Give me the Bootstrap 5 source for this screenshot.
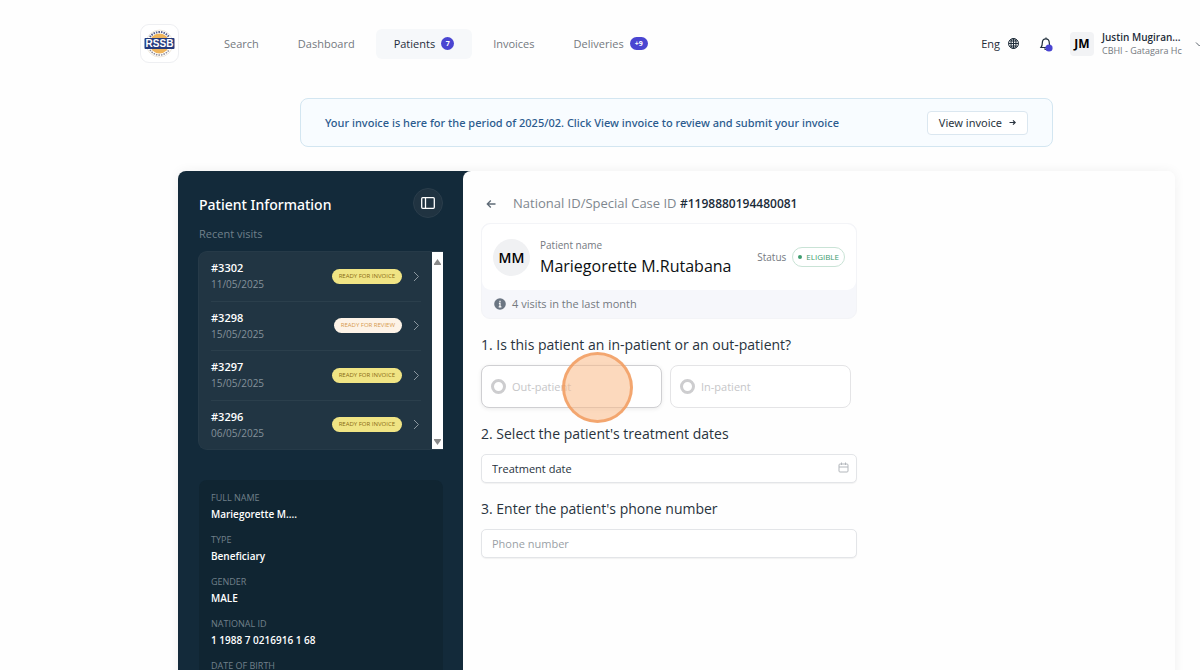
<!DOCTYPE html>
<html lang="en">
<head>
<meta charset="utf-8">
<meta name="viewport" content="width=device-width, initial-scale=1">
<title>Patients - RSSB</title>
<link href="https://cdn.jsdelivr.net/npm/bootstrap@5.3.0/dist/css/bootstrap.min.css" rel="stylesheet">
<style>
  body { font-family: "Open Sans", "Noto Sans", sans-serif; font-size: 11px; line-height: 16px; color: #1f2d3a; background: #fefefe; }
  svg { display: block; flex: none; }
  a { text-decoration: none; color: inherit; }

  /* top bar */
  .topbar { padding: 24px 0 0 140px; height: 63px; }
  .brand-tile { width: 39px; height: 39px; border: 1px solid #eeeff2; border-radius: 9px; background: #fff; }
  .menu { margin-left: 27px; gap: 3px; }
  .menu a { height: 30px; padding: 0 18px; border-radius: 6px; color: #74797f; gap: 6px; }
  .menu a.active { background: #f6f8fa; color: #1f2d3a; }
  .pill { background: #4a45d1; color: #fff; font-size: 7px; line-height: 13px; height: 13px; min-width: 13px; border-radius: 7px; font-weight: 700; text-align: center; }
  .pill-wide { padding: 0 5px; }
  .plain-btn { border: 0; background: none; padding: 0; color: inherit; }
  .initials { width: 24px; height: 24px; border-radius: 4px; background: #f2f3f5; color: #000; font-size: 12px; font-weight: 700; line-height: 24px; text-align: center; }
  .who { width: 82px; line-height: 13px; }
  .who strong { font-size: 10px; font-weight: 600; }
  .who span { font-size: 9px; color: #74797f; white-space: nowrap; }

  /* invoice notice */
  .notice { margin: 35px 147px 0 300px; padding: 0 24px; height: 49px; border: 1px solid #d3e6f1; border-radius: 8px; background: #f8fcff; color: #2b5b8e; font-family: "Noto Sans", "Open Sans", sans-serif; font-weight: 500; }
  .notice a { height: 24px; padding: 0 11px; border: 1px solid #dbe7f0; border-radius: 4px; background: #fff; color: #2b3540; gap: 7px; font-weight: 400; }

  /* main sheet */
  .sheet { margin: 24px 25px 0 178px; border-radius: 8px 8px 0 0; background: linear-gradient(90deg, #132a3a 300px, #fefefe 300px); box-shadow: 0 0 12px rgba(0,0,0,.06); }
  .side { flex: 0 0 285px; padding: 17px 20px 0 21px; }
  .side h1 { font-family: "Noto Sans", "Open Sans", sans-serif; font-size: 14px; font-weight: 500; line-height: 20px; color: #fff; padding-top: 4px; }
  .round-btn { width: 30px; height: 30px; border: 1px solid #2a3d4b; border-radius: 50%; background: #203341; padding: 0; }
  .recent { color: #70808b; margin-top: 8px; }
  .visits { height: 199px; margin: 9px 0 0 -1px; border: 1px solid #263a48; border-right: 0; border-radius: 9px 0 0 9px; background: #213543; }
  .visit-list { padding: 0 11px 0 12px; }
  .visit-list a { border-bottom: 1px solid #2b3f4c; }
  .visit-list a:last-child { border-bottom: 0; }
  .visit-list b { display: block; color: #fff; font-weight: 600; line-height: 17px; }
  .visit-list time { display: block; font-size: 10px; line-height: 17px; color: #84919a; }
  .state { padding: 0 7px; border-radius: 8px; background: #f0e484; color: #8a6b14; font-size: 6px; line-height: 15px; }
  .state-review { background: #fdf3e7; color: #d69a4c; }
  .scroll-track { width: 11px; background: #fff; padding: 7px 0 4px; }
  .facts { margin: 30px 0 0; padding: 10px 12px; border-radius: 8px; background: #102532; }
  .facts dt { font-size: 9px; font-weight: 400; color: #71808a; line-height: 16px; }
  .facts dd { font-size: 10px; font-weight: 600; color: #fff; line-height: 16px; margin: 0 0 10px; }

  .work { background: #fefefe; border-radius: 8px 8px 0 0; padding: 22px 18px 0; }
  .form-col { max-width: 376px; }
  .case-line { font-size: 13px; line-height: 20px; color: #7f878e; gap: 17px; padding-left: 5px; }
  .case-line strong { font-size: 12px; font-weight: 600; color: #1b2b39; }
  .person { margin-top: 9px; border: 1px solid #f3f4f7; border-radius: 9px; background: #f6f7fb; }
  .person-top { height: 66px; padding: 0 11px; border-radius: 9px; background: #fff; gap: 10px; }
  .avatar { width: 37px; height: 37px; border-radius: 50%; background: #f0f1f3; color: #000; font-size: 14px; font-weight: 600; line-height: 37px; text-align: center; }
  .muted-label { font-size: 10px; color: #74797f; }
  .person h2 { font-size: 16px; font-weight: 400; line-height: 22px; color: #0c0f12; margin: 2px 0 0; }
  .status-pair { gap: 6px; }
  .eligible { height: 20px; padding: 0 5px; border: 1px solid #c9e3d6; border-radius: 10px; color: #3f9d70; font-size: 8px; gap: 4px; font-weight: 500; }
  .dot { width: 4px; height: 4px; border-radius: 50%; background: #3f9d70; }
  .visit-note { height: 28px; padding: 0 12px; color: #74797f; gap: 6px; }
  .question { font-size: 14px; line-height: 20px; font-weight: 400; color: #28333d; margin: 0; padding: 16px 0 10px; }
  .choice { flex: 0 0 181px; height: 43px; padding: 0 9px; border: 1px solid #e4e4e6; border-radius: 8px; background: #fff; color: #c6c6c8; gap: 6px; }
  .choice-hot { border-color: #cfcfd2; box-shadow: 0 1px 4px rgba(0,0,0,.08); }
  .choice input { appearance: none; width: 15px; height: 15px; margin: 0; border: 3px solid #cdcdcf; border-radius: 50%; background: #fff; }
  .click-mark { position: absolute; left: 81px; top: -13px; width: 71px; height: 71px; border: 3px solid rgba(240,150,85,.75); border-radius: 50%; background: rgba(250,185,135,.55); pointer-events: none; }
  .entry { display: block; width: 100%; height: 29px; padding: 0 10px; border: 1px solid #e3e5e8; border-radius: 5px; background: #fff; color: #28333d; box-shadow: 0 1px 1px rgba(0,0,0,.05); }
  .entry::placeholder { color: #9a9fa6; }
  .entry-dark::placeholder { color: #28333d; opacity: 1; }
  .entry-icon { position: absolute; right: 8px; top: 8px; }
</style>
</head>
<body>
<div class="vh-100 d-flex flex-column overflow-hidden">
  <header class="topbar d-flex align-items-center flex-shrink-0">
    <a href="#" class="brand-tile d-flex align-items-center justify-content-center flex-shrink-0" aria-label="RSSB home">
      <svg width="31" height="31" viewBox="0 0 62 62">
        <circle cx="31" cy="31" r="27" fill="#fff" stroke="#dccfb6" stroke-width="1"/>
        <circle cx="31" cy="31" r="20" fill="#efb45a"/>
        <path d="M12 18a23 23 0 0 1 38 0" fill="none" stroke="#59618b" stroke-width="4" stroke-dasharray="3 2"/>
        <path d="M12 44a23 23 0 0 0 38 0" fill="none" stroke="#8e8a94" stroke-width="3" stroke-dasharray="3 2"/>
        <rect x="1" y="20" width="60" height="22" rx="2" fill="#243a7c"/>
        <text x="31" y="38" text-anchor="middle" font-family="Liberation Sans, sans-serif" font-weight="700" font-size="20" fill="#fff">RSSB</text>
      </svg>
    </a>
    <nav class="menu d-flex" aria-label="Main">
      <a class="d-flex align-items-center" href="#">Search</a>
      <a class="d-flex align-items-center" href="#">Dashboard</a>
      <a class="active d-flex align-items-center" href="#" aria-current="page">Patients <span class="pill">7</span></a>
      <a class="d-flex align-items-center" href="#">Invoices</a>
      <a class="d-flex align-items-center" href="#">Deliveries <span class="pill pill-wide">+9</span></a>
    </nav>
    <div class="ms-auto d-flex align-items-center flex-shrink-0">
      <button class="plain-btn d-flex align-items-center gap-2" type="button">Eng
        <svg width="11" height="11" viewBox="0 0 22 22" fill="none" stroke="#1f2d3a" stroke-width="2"><circle cx="11" cy="11" r="10"/><ellipse cx="11" cy="11" rx="5" ry="10"/><path d="M1 11h20M3 6h16M3 16h16M11 1v20"/></svg>
      </button>
      <button class="plain-btn ms-3 ps-1" type="button" aria-label="Notifications">
        <svg width="15" height="16" viewBox="0 0 15 16" fill="none" stroke="#1f2d3a" stroke-width="1.200"><path d="M7 1.500v1M2 11.500h9.500c-1-1.200-1.200-2.200-1.200-4.500C10.300 4.500 9 2.800 6.800 2.800S3.300 4.500 3.300 7c0 2.300-.3 3.300-1.300 4.500zM5.500 12.500a1.400 1.400 0 0 0 2.600 0"/><circle cx="10" cy="12" r="3.600" fill="#4a45d1" stroke="none"/></svg>
      </button>
      <button class="plain-btn ms-3 d-flex align-items-center gap-2 text-start" type="button">
        <span class="initials">JM</span>
        <span class="who d-flex flex-column"><strong>Justin Mugiran...</strong><span>CBHI - Gatagara Hc</span></span>
        <svg width="8" height="6" viewBox="0 0 8 6" fill="none" stroke="#5c646c"><path d="M4 1.500l3.500 3.500L11 1.500"/></svg>
      </button>
    </div>
  </header>

  <div class="notice d-flex align-items-center justify-content-between flex-shrink-0" role="status">
    <span>Your invoice is here for the period of 2025/02. Click View invoice to review and submit your invoice</span>
    <a class="d-flex align-items-center flex-shrink-0" href="#">View invoice
      <svg width="7" height="7" viewBox="0 0 7 7" fill="none" stroke="#2b3540" stroke-width="1.200"><path d="M.5 3.500h5.500M4 1.300l2.200 2.200L4 5.700"/></svg>
    </a>
  </div>

  <main class="sheet d-flex flex-grow-1">
    <aside class="side">
      <div class="d-flex justify-content-between">
        <h1 class="m-0 align-self-center">Patient Information</h1>
        <button class="round-btn d-flex align-items-center justify-content-center" type="button" aria-label="Collapse panel">
          <svg width="14" height="12" viewBox="0 0 14 12" fill="none" stroke="#fff" stroke-width="1.300"><rect x=".7" y=".7" width="12.600" height="10.600" rx="1"/><path d="M4.500.7v10.600"/></svg>
        </button>
      </div>
      <div class="recent">Recent visits</div>
      <div class="visits d-flex">
        <div class="visit-list flex-grow-1 d-flex flex-column">
          <a href="#" class="d-flex align-items-center flex-fill"><span class="me-auto"><b>#3302</b><time>11/05/2025</time></span><span class="state">READY FOR INVOICE</span><svg class="ms-2" width="11" height="11" viewBox="0 0 11 11" fill="none" stroke="#8b979f"><path d="M4 1l4.500 4.500L4 10"/></svg></a>
          <a href="#" class="d-flex align-items-center flex-fill"><span class="me-auto"><b>#3298</b><time>15/05/2025</time></span><span class="state state-review">READY FOR REVIEW</span><svg class="ms-2" width="11" height="11" viewBox="0 0 11 11" fill="none" stroke="#8b979f"><path d="M4 1l4.500 4.500L4 10"/></svg></a>
          <a href="#" class="d-flex align-items-center flex-fill"><span class="me-auto"><b>#3297</b><time>15/05/2025</time></span><span class="state">READY FOR INVOICE</span><svg class="ms-2" width="11" height="11" viewBox="0 0 11 11" fill="none" stroke="#8b979f"><path d="M4 1l4.500 4.500L4 10"/></svg></a>
          <a href="#" class="d-flex align-items-center flex-fill"><span class="me-auto"><b>#3296</b><time>06/05/2025</time></span><span class="state">READY FOR INVOICE</span><svg class="ms-2" width="11" height="11" viewBox="0 0 11 11" fill="none" stroke="#8b979f"><path d="M4 1l4.500 4.500L4 10"/></svg></a>
        </div>
        <div class="scroll-track d-flex flex-column justify-content-between align-items-center" aria-hidden="true">
          <svg width="7" height="6" viewBox="0 0 7 6" fill="#8a8a8a"><path d="M3.500 0L7 5v1H0V5z"/></svg>
          <svg width="7" height="6" viewBox="0 0 7 6" fill="#8a8a8a"><path d="M3.500 6L7 1V0H0v1z"/></svg>
        </div>
      </div>
      <dl class="facts">
        <dt>FULL NAME</dt><dd>Mariegorette M....</dd>
        <dt>TYPE</dt><dd>Beneficiary</dd>
        <dt>GENDER</dt><dd>MALE</dd>
        <dt>NATIONAL ID</dt><dd>1 1988 7 0216916 1 68</dd>
        <dt>DATE OF BIRTH</dt>
      </dl>
    </aside>

    <section class="work flex-grow-1">
      <form class="form-col">
        <div class="case-line d-flex align-items-center">
          <a href="#" aria-label="Back"><svg width="10" height="10" viewBox="0 0 10 10" fill="none" stroke="#5e6a76" stroke-width="1.300"><path d="M9.500 5H1.500M4.800 1.500L1.300 5l3.500 3.500"/></svg></a>
          <span>National ID/Special Case ID <strong>#1198880194480081</strong></span>
        </div>
        <div class="person">
          <div class="person-top d-flex align-items-center">
            <span class="avatar">MM</span>
            <div class="me-auto"><div class="muted-label">Patient name</div><h2>Mariegorette M.Rutabana</h2></div>
            <div class="status-pair d-flex align-items-center">
              <span class="muted-label">Status</span>
              <span class="eligible d-flex align-items-center"><i class="dot"></i>ELIGIBLE</span>
            </div>
          </div>
          <div class="visit-note d-flex align-items-center">
            <svg width="12" height="12" viewBox="0 0 12 12"><circle cx="6" cy="6" r="5.800" fill="#6b7683"/><path d="M6 2.700v1.500M4.900 5.300H6v3.500M4.700 8.900h2.700" fill="none" stroke="#fff" stroke-width="1.200"/></svg>
            4 visits in the last month
          </div>
        </div>

        <fieldset>
          <legend class="question">1. Is this patient an in-patient or an out-patient?</legend>
          <div class="d-flex gap-2 position-relative">
            <label class="choice choice-hot d-flex align-items-center"><input type="radio" name="kind">Out-patient</label>
            <label class="choice d-flex align-items-center"><input type="radio" name="kind">In-patient</label>
            <span class="click-mark"></span>
          </div>
        </fieldset>

        <label class="question d-block" for="date">2. Select the patient's treatment dates</label>
        <div class="position-relative">
          <input class="entry entry-dark" id="date" type="text" placeholder="Treatment date">
          <svg class="entry-icon" width="11" height="11" viewBox="0 0 11 11" fill="none" stroke="#b3b7bc"><rect x="1" y="2" width="9" height="8" rx="1"/><path d="M1 5h9M3.500.5V3M7.500.5V3"/></svg>
        </div>

        <label class="question d-block" for="phone">3. Enter the patient's phone number</label>
        <input class="entry" id="phone" type="tel" placeholder="Phone number">
      </form>
    </section>
  </main>
</div>
<script src="https://cdn.jsdelivr.net/npm/bootstrap@5.3.0/dist/js/bootstrap.bundle.min.js"></script>
</body>
</html>
